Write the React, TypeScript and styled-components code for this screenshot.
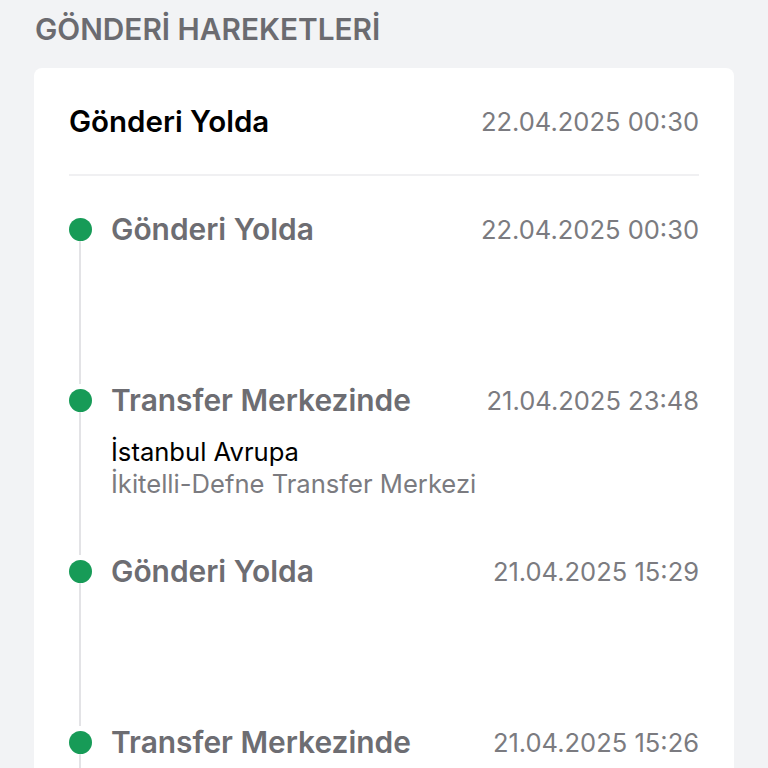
import React from "react";
import styled, { createGlobalStyle } from "styled-components";

const GlobalStyle = createGlobalStyle`
  html, body {
    margin: 0;
    padding: 0;
    background: #f2f3f5;
    font-family: Inter, "Noto Sans", sans-serif;
  }
`;

const Page = styled.div`
  padding: 11px 34px 0 34px;
  height: 768px;
  box-sizing: border-box;
  overflow: hidden;
`;

const SectionTitle = styled.h2`
  margin: 0 0 0 1px;
  font-size: 29.8px;
  font-weight: 600;
  color: #6b6b70;
  line-height: 36px;
`;

const Card = styled.div`
  margin-top: 21px;
  background: #ffffff;
  border-radius: 8px;
  padding: 0 35px;
  min-height: 800px;
`;

const Header = styled.div`
  display: flex;
  justify-content: space-between;
  align-items: center;
  height: 106px;
  border-bottom: 2px solid #f0f0f2;
`;

const HeaderTitle = styled.div`
  font-size: 29.5px;
  font-weight: 600;
  color: #000000;
`;

const DateText = styled.div`
  font-size: 25.5px;
  font-weight: 400;
  color: #7b7b80;
`;

const Timeline = styled.div`
  padding-top: 37px;
`;

const Item = styled.div`
  display: flex;
  height: 171px;
`;

const Rail = styled.div`
  width: 22px;
  display: flex;
  flex-direction: column;
  align-items: center;
  padding-top: 5px;
`;

const Dot = styled.div`
  width: 23px;
  height: 23px;
  border-radius: 50%;
  background: #179b57;
  flex-shrink: 0;
`;

const Line = styled.div`
  flex: 1;
  width: 2px;
  background: #e3e3e6;
`;

const Body = styled.div`
  flex: 1;
  margin-left: 20px;
`;

const Row = styled.div`
  display: flex;
  justify-content: space-between;
  align-items: center;
  height: 32px;
`;

const ItemTitle = styled.div`
  font-size: 29.9px;
  font-weight: 600;
  color: #6d6d72;
`;

const Location = styled.div<{ muted?: boolean }>`
  font-size: 25.6px;
  line-height: 32px;
  color: ${(p) => (p.muted ? "#7b7b80" : "#000000")};
`;

const Details = styled.div`
  margin-top: 20px;
`;

interface Movement {
  title: string;
  date: string;
  city?: string;
  place?: string;
}

const movements: Movement[] = [
  { title: "Gönderi Yolda", date: "22.04.2025 00:30" },
  {
    title: "Transfer Merkezinde",
    date: "21.04.2025 23:48",
    city: "İstanbul Avrupa",
    place: "İkitelli-Defne Transfer Merkezi",
  },
  { title: "Gönderi Yolda", date: "21.04.2025 15:29" },
  { title: "Transfer Merkezinde", date: "21.04.2025 15:26" },
];

const App = () => {
  return (
    <>
      <GlobalStyle />
      <Page>
        <SectionTitle>GÖNDERİ HAREKETLERİ</SectionTitle>
        <Card>
          <Header>
            <HeaderTitle>Gönderi Yolda</HeaderTitle>
            <DateText>22.04.2025 00:30</DateText>
          </Header>
          <Timeline>
            {movements.map((m, i) => (
              <Item key={i}>
                <Rail>
                  <Dot />
                  <Line />
                </Rail>
                <Body>
                  <Row>
                    <ItemTitle>{m.title}</ItemTitle>
                    <DateText>{m.date}</DateText>
                  </Row>
                  {m.city && (
                    <Details>
                      <Location>{m.city}</Location>
                      <Location muted>{m.place}</Location>
                    </Details>
                  )}
                </Body>
              </Item>
            ))}
          </Timeline>
        </Card>
      </Page>
    </>
  );
};

export default App;
